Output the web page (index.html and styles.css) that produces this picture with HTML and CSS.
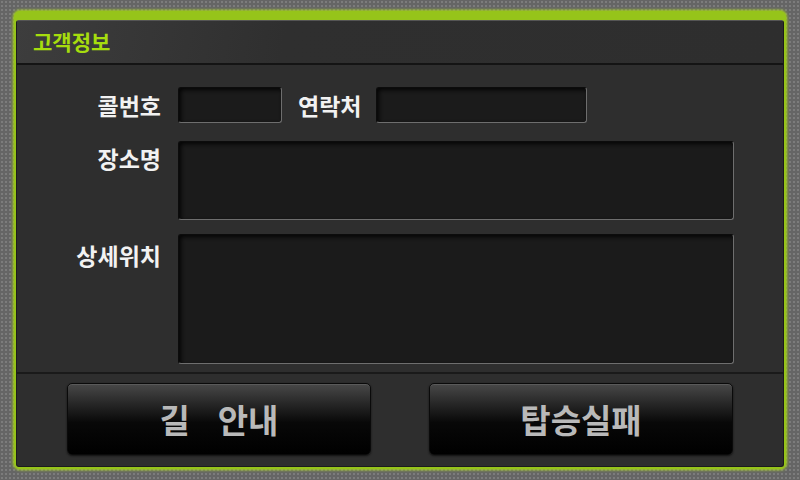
FILE: index.html
```html
<!DOCTYPE html>
<html lang="ko">
<head>
  <meta charset="UTF-8" />
  <title>고객정보</title>
  <link rel="stylesheet" href="styles.css">
</head>
<body>
  <div class="frame">
    <div class="panel">
      <!-- 헤더 -->
      <div class="header">고객정보</div>

      <!-- 입력 영역 -->
      <div class="form">
        <div class="label row1">콜번호</div>
        <div class="line">
          <div class="input small"></div>
          <div class="label inline">연락처</div>
          <div class="input phone"></div>
        </div>

        <div class="label top">장소명</div>
        <div class="input place"></div>

        <div class="label top detail">상세위치</div>
        <div class="input detail"></div>
      </div>

      <!-- 버튼 -->
      <div class="footer">
        <button class="btn">길&nbsp;&nbsp;&nbsp;안내</button>
        <button class="btn">탑승실패</button>
      </div>
    </div>
  </div>
</body>
</html>
```

FILE: styles.css
```css
html, body {
  margin: 0;
  height: 100%;
}

body {
  background-color: #656565;
  background-image: radial-gradient(#7c7c7c 0.9px, transparent 1.2px);
  background-size: 4px 4px;
  padding: 11px 14px 11px 14px;
  box-sizing: border-box;
  font-family: "Noto Sans CJK KR", "Liberation Sans", sans-serif;
  font-weight: bold;
}

.frame {
  height: 458px;
  border: 2px solid #96c41a;
  border-top-width: 9px;
  border-radius: 6px;
  box-shadow: 0 0 3px 1px #a6d21e;
  box-sizing: border-box;
  background: #96c41a;
}

.panel {
  height: 100%;
  background: #2e2e2e;
  border: 1px solid #1c1c1c;
  border-top-color: #555;
  border-radius: 3px;
  box-sizing: border-box;
  display: flex;
  flex-direction: column;
}

.header {
  height: 42px;
  padding-left: 16px;
  line-height: 40px;
  font-size: 21px;
  color: #a6dd0e;
  background: linear-gradient(100deg, #3d3d3d 0%, #2f2f2f 35%, #2e2e2e 100%);
  border-bottom: 2px solid #141414;
}

.form {
  height: 309px;
  display: grid;
  grid-template-columns: 144px 556px;
  grid-template-rows: 36px 79px 130px;
  column-gap: 17px;
  row-gap: 18px;
  padding-top: 22px;
  box-sizing: border-box;
  border-bottom: 2px solid #1a1a1a;
}

.label {
  font-size: 23px;
  color: #f2f2f2;
  text-align: right;
  line-height: 28px;
}

.label.row1 {
  align-self: center;
}

.label.top {
  padding-top: 3px;
}

.label.detail {
  margin-top: -4px;
  padding-top: 7px;
}

.line {
  display: flex;
  align-items: center;
}

.label.inline {
  margin: 0 15px 0 16px;
}

.input {
  background: #1b1b1b;
  border: 1px solid #0c0c0c;
  border-right-color: #6e6e6e;
  border-bottom-color: #6e6e6e;
  border-radius: 3px;
  box-shadow: inset 2px 2px 4px #050505;
  box-sizing: border-box;
}

.input.small {
  width: 104px;
  height: 36px;
}

.input.phone {
  width: 211px;
  height: 36px;
}

.input.detail {
  margin-top: -4px;
  height: 130px;
}

.footer {
  flex: 1;
  display: flex;
  align-items: center;
  gap: 58px;
  padding: 0 0 2px 50px;
}

.btn {
  width: 304px;
  height: 72px;
  border: 1px solid #0a0a0a;
  border-radius: 5px;
  background: linear-gradient(#484848 0%, #2e2e2e 22%, #080808 55%, #000 100%);
  box-shadow: inset 0 1px 0 #5a5a5a, 0 1px 2px #111;
  color: #b9b9b9;
  font-family: "Noto Sans CJK KR", "Liberation Sans", sans-serif;
  font-weight: bold;
  font-size: 33px;
  padding: 0;
}
```
